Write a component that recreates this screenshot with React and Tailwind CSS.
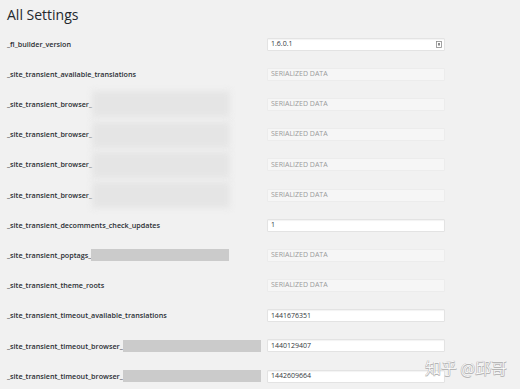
import React from "react";

const rows = [
  { label: "_fl_builder_version", value: "1.6.0.1", kind: "edit", icon: true },
  { label: "_site_transient_available_translations", value: "SERIALIZED DATA", kind: "ser" },
  { label: "_site_transient_browser_", value: "SERIALIZED DATA", kind: "ser", blur: "soft" },
  { label: "_site_transient_browser_", value: "SERIALIZED DATA", kind: "ser", blur: "soft" },
  { label: "_site_transient_browser_", value: "SERIALIZED DATA", kind: "ser", blur: "soft" },
  { label: "_site_transient_browser_", value: "SERIALIZED DATA", kind: "ser", blur: "soft" },
  { label: "_site_transient_decomments_check_updates", value: "1", kind: "edit" },
  { label: "_site_transient_poptags_", value: "SERIALIZED DATA", kind: "ser", blur: "hard" },
  { label: "_site_transient_theme_roots", value: "SERIALIZED DATA", kind: "ser" },
  { label: "_site_transient_timeout_available_translations", value: "1441676351", kind: "edit" },
  { label: "_site_transient_timeout_browser_", value: "1440129407", kind: "edit", blur: "hard" },
  { label: "_site_transient_timeout_browser_", value: "1442609664", kind: "edit", blur: "hard" },
];

function Blur({ type }) {
  if (type === "soft") {
    return (
      <span className="inline-block w-[138px] h-[26px] align-middle bg-[#e5e5e5] blur-[3px]" />
    );
  }
  return (
    <span className="inline-block w-[138px] h-[12px] align-middle bg-[#cbcbcb] blur-[0.6px]" />
  );
}

export default function App() {
  return (
    <div
      className="w-[520px] h-[389px] bg-[#f1f1f1] relative overflow-hidden"
      style={{ fontFamily: '"Open Sans", "Noto Sans", sans-serif' }}
    >
      <div className="h-[29px] pl-[7px] flex items-center text-[14px] text-[#23282d] leading-none">
        All Settings
      </div>
      <div className="flex flex-col">
        {rows.map((r, i) => (
          <div key={i} className="h-[30.2px] flex items-center pl-[7px]">
            <div className="w-[260px] flex items-center text-[7.2px] font-semibold text-[#2a2e33] whitespace-nowrap">
              <span>{r.label}</span>
              {r.blur && <Blur type={r.blur} />}
            </div>
            <div
              className={
                r.kind === "edit"
                  ? "w-[178px] h-[13px] flex items-center justify-between px-[3px] bg-white border border-[#e3e3e3] rounded-[1px] shadow-[inset_0_1px_1px_rgba(0,0,0,0.05)] text-[7px] text-[#32373c]"
                  : "w-[178px] h-[13px] flex items-center px-[3px] bg-[#f6f6f6] border border-[#ececec] rounded-[1px] text-[7px] text-[#9a9a9a]"
              }
            >
              <span>{r.value}</span>
              {r.icon && (
                <svg width="6" height="7" viewBox="0 0 6 7" className="mr-[-1px]">
                  <rect x="0.5" y="0.5" width="5" height="6" fill="none" stroke="#8a8a8a" strokeWidth="0.8" />
                  <rect x="2" y="2" width="2" height="2.5" fill="#8a8a8a" />
                </svg>
              )}
            </div>
          </div>
        ))}
      </div>
      <div
        className="absolute left-[425px] top-[359px] text-[16px] font-light text-white leading-none whitespace-nowrap"
        style={{
          fontFamily: '"Noto Sans CJK SC", sans-serif',
          textShadow: "0.5px 0.5px 0 #b5b5b5, -0.5px -0.5px 0 #b5b5b5, 0.5px -0.5px 0 #b5b5b5, -0.5px 0.5px 0 #b5b5b5",
        }}
      >
        知乎 @邱哥
      </div>
    </div>
  );
}
